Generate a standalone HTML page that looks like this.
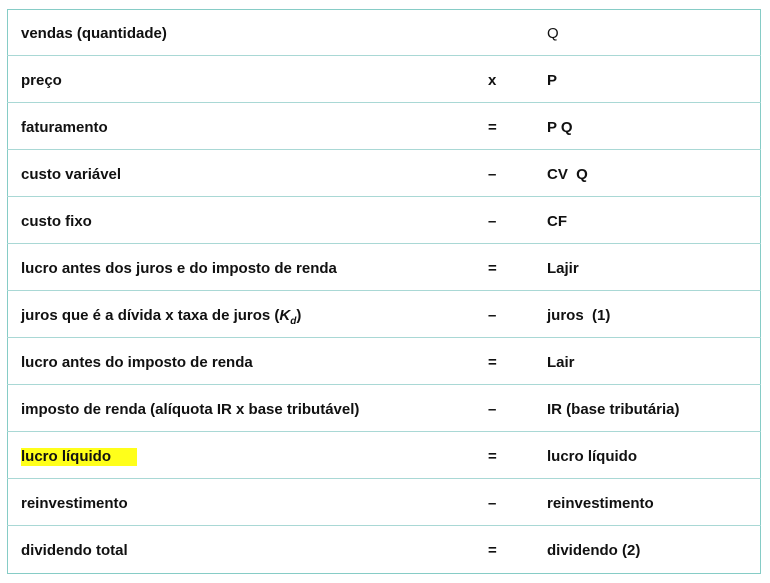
<!DOCTYPE html>
<html><head><meta charset="utf-8"><style>
body{margin:0;width:770px;height:583px;background:#fff;position:relative;overflow:hidden;font-family:"Liberation Sans",sans-serif;font-weight:bold;font-size:15px;color:#111;}
.box{position:absolute;left:7px;top:9px;width:754px;height:565px;border:1px solid #86ccc6;box-sizing:border-box;}
.row{position:absolute;left:7px;width:754px;height:47px;border-bottom:1px solid #a9d8d5;box-sizing:border-box;}
.t{position:absolute;top:16px;white-space:nowrap;line-height:18px;}
.a{left:14px}.b{left:481px}.c{left:540px}
.hl{background:#ffff1a;padding-right:26px;}
</style></head><body>
<div class="box"></div>
<div class="row" style="top:9px"><span class="t a">vendas (quantidade)</span><span class="t c" style="font-weight:normal">Q</span></div>
<div class="row" style="top:56px"><span class="t a">preço</span><span class="t b">x</span><span class="t c">P</span></div>
<div class="row" style="top:103px"><span class="t a">faturamento</span><span class="t b">=</span><span class="t c">P Q</span></div>
<div class="row" style="top:150px"><span class="t a">custo variável</span><span class="t b">–</span><span class="t c">CV&nbsp; Q</span></div>
<div class="row" style="top:197px"><span class="t a">custo fixo</span><span class="t b">–</span><span class="t c">CF</span></div>
<div class="row" style="top:244px"><span class="t a">lucro antes dos juros e do imposto de renda</span><span class="t b">=</span><span class="t c">Lajir</span></div>
<div class="row" style="top:291px"><span class="t a">juros que é a dívida x taxa de juros (<i>K<sub style="font-size:10px">d</sub></i>)</span><span class="t b">–</span><span class="t c">juros&nbsp; (1)</span></div>
<div class="row" style="top:338px"><span class="t a">lucro antes do imposto de renda</span><span class="t b">=</span><span class="t c">Lair</span></div>
<div class="row" style="top:385px"><span class="t a">imposto de renda (alíquota IR x base tributável)</span><span class="t b">–</span><span class="t c">IR (base tributária)</span></div>
<div class="row" style="top:432px"><span class="t a hl">lucro líquido</span><span class="t b">=</span><span class="t c">lucro líquido</span></div>
<div class="row" style="top:479px"><span class="t a">reinvestimento</span><span class="t b">–</span><span class="t c">reinvestimento</span></div>
<div class="row" style="top:526px;border-bottom:none"><span class="t a">dividendo total</span><span class="t b">=</span><span class="t c">dividendo (2)</span></div>
</body></html>
